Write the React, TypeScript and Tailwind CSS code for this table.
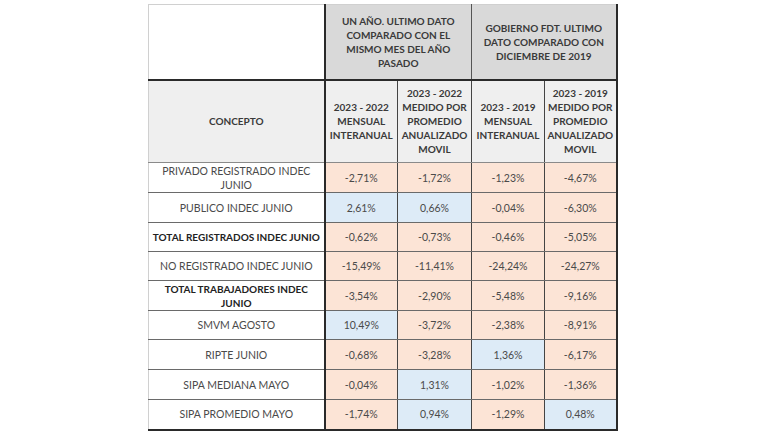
import React from "react";

type Row = { label: string[]; bold?: boolean; vals: [string, string][] };

const O = "o";
const B = "b";

const rows: Row[] = [
  { label: ["PRIVADO REGISTRADO INDEC", "JUNIO"], vals: [["-2,71%", O], ["-1,72%", O], ["-1,23%", O], ["-4,67%", O]] },
  { label: ["PUBLICO INDEC JUNIO"], vals: [["2,61%", B], ["0,66%", B], ["-0,04%", O], ["-6,30%", O]] },
  { label: ["TOTAL REGISTRADOS INDEC JUNIO"], bold: true, vals: [["-0,62%", O], ["-0,73%", O], ["-0,46%", O], ["-5,05%", O]] },
  { label: ["NO REGISTRADO INDEC JUNIO"], vals: [["-15,49%", O], ["-11,41%", O], ["-24,24%", O], ["-24,27%", O]] },
  { label: ["TOTAL TRABAJADORES INDEC", "JUNIO"], bold: true, vals: [["-3,54%", O], ["-2,90%", O], ["-5,48%", O], ["-9,16%", O]] },
  { label: ["SMVM AGOSTO"], vals: [["10,49%", B], ["-3,72%", O], ["-2,38%", O], ["-8,91%", O]] },
  { label: ["RIPTE JUNIO"], vals: [["-0,68%", O], ["-3,28%", O], ["1,36%", B], ["-6,17%", O]] },
  { label: ["SIPA MEDIANA MAYO"], vals: [["-0,04%", O], ["1,31%", B], ["-1,02%", O], ["-1,36%", O]] },
  { label: ["SIPA PROMEDIO MAYO"], vals: [["-1,74%", O], ["0,94%", B], ["-1,29%", O], ["0,48%", B]] },
];

const heights = ["h-[30px]", "h-[30px]", "h-[29px]", "h-[29px]", "h-[30px]", "h-[29px]", "h-[30px]", "h-[30px]", "h-[30px]"];

function Lines({ lines }: { lines: string[] }) {
  return (
    <>
      {lines.map((l, i) => (
        <span key={i} className="block">
          {l}
        </span>
      ))}
    </>
  );
}

export default function App() {
  return (
    <div className="w-[774px] h-[434px] bg-white pl-[148px] pt-[4px]" style={{ fontFamily: "Lato, 'Liberation Sans', sans-serif" }}>
      <table className="table-fixed border-collapse w-[468px] text-[10px] leading-[14px] text-[#3a3a3a]">
        <colgroup>
          <col className="w-[176px]" />
          <col className="w-[73px]" />
          <col className="w-[74px]" />
          <col className="w-[73px]" />
          <col className="w-[72px]" />
        </colgroup>
        <thead>
          <tr className="h-[75px]">
            <th className="bg-white border border-[#d0d0d0] border-r-2 border-r-[#2a2a2a] border-b-2 border-b-[#2a2a2a]"></th>
            <th colSpan={2} className="bg-[#d9d9d9] font-bold text-center align-middle whitespace-nowrap border-b-2 border-b-[#2a2a2a] border-r border-r-[#555] border-t border-t-[#d0d0d0]">
              <Lines lines={["UN AÑO. ULTIMO DATO", "COMPARADO CON EL", "MISMO MES DEL AÑO", "PASADO"]} />
            </th>
            <th colSpan={2} className="bg-[#d9d9d9] font-bold text-center align-middle whitespace-nowrap border-b-2 border-b-[#2a2a2a] border-r-2 border-r-[#2a2a2a] border-t border-t-[#d0d0d0]">
              <Lines lines={["GOBIERNO FDT. ULTIMO", "DATO COMPARADO CON", "DICIEMBRE DE 2019"]} />
            </th>
          </tr>
          <tr className="h-[83px]">
            <th className="bg-[#efefef] font-bold text-center border-l border-l-[#d0d0d0] border-r-2 border-r-[#2a2a2a] border-b border-b-[#8a8a8a]">CONCEPTO</th>
            <th className="bg-[#efefef] font-bold text-center whitespace-nowrap border-r border-r-[#444] border-b border-b-[#8a8a8a]">
              <Lines lines={["2023 - 2022", "MENSUAL", "INTERANUAL"]} />
            </th>
            <th className="bg-[#efefef] font-bold text-center whitespace-nowrap border-r border-r-[#444] border-b border-b-[#8a8a8a]">
              <Lines lines={["2023 - 2022", "MEDIDO POR", "PROMEDIO", "ANUALIZADO", "MOVIL"]} />
            </th>
            <th className="bg-[#efefef] font-bold text-center whitespace-nowrap border-r border-r-[#444] border-b border-b-[#8a8a8a]">
              <Lines lines={["2023 - 2019", "MENSUAL", "INTERANUAL"]} />
            </th>
            <th className="bg-[#efefef] font-bold text-center whitespace-nowrap border-r-2 border-r-[#2a2a2a] border-b border-b-[#8a8a8a]">
              <Lines lines={["2023 - 2019", "MEDIDO POR", "PROMEDIO", "ANUALIZADO", "MOVIL"]} />
            </th>
          </tr>
        </thead>
        <tbody>
          {rows.map((r, i) => (
            <tr key={i} className={heights[i]}>
              <td
                className={`bg-white text-center whitespace-nowrap border-l border-l-[#d0d0d0] border-r-2 border-r-[#2a2a2a] border-b ${i === rows.length - 1 ? "border-b-2 border-b-[#2a2a2a]" : "border-b-[#6a6a6a]"} ${r.bold ? "font-bold text-[10px] text-[#222]" : "text-[10.5px] text-[#4a4a4a]"}`}
              >
                <Lines lines={r.label} />
              </td>
              {r.vals.map(([v, c], j) => (
                <td
                  key={j}
                  className={`text-center text-[10.5px] text-[#4a4a4a] border-b ${i === rows.length - 1 ? "border-b-2 border-b-[#2a2a2a]" : "border-b-[#6a6a6a]"} ${j === 3 ? "border-r-2 border-r-[#2a2a2a]" : "border-r border-r-[#444]"} ${c === "b" ? "bg-[#ddebf7]" : "bg-[#fce4d6]"}`}
                >
                  {v}
                </td>
              ))}
            </tr>
          ))}
        </tbody>
      </table>
    </div>
  );
}
